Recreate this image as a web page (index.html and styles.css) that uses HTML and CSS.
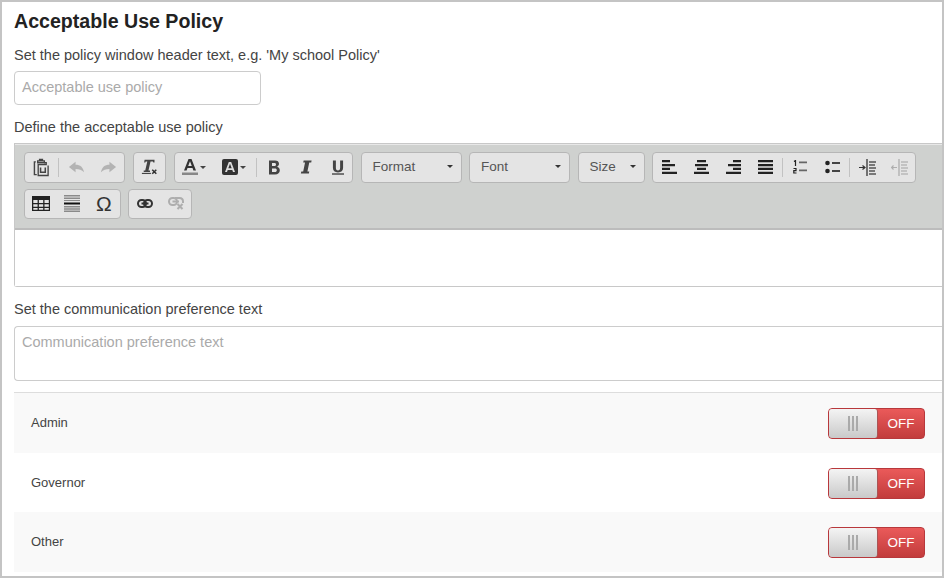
FILE: index.html
```html
<!DOCTYPE html>
<html lang="en">
<head>
<meta charset="utf-8">
<title>Acceptable Use Policy</title>
<link rel="stylesheet" href="styles.css">
</head>
<body>
<main class="frame">
  <h1 class="title">Acceptable Use Policy</h1>
  <label class="label label-first">Set the policy window header text, e.g. 'My school Policy'</label>
  <div class="input">Acceptable use policy</div>
  <label class="label label-editor">Define the acceptable use policy</label>
  <section class="editor">
    <div class="toolbar">
      <div class="row">
        <div class="group g-history">
          <span class="btn"><svg width="17" height="19" viewBox="0 0 18 20"><path d="M3 4H1.500v13.500H4M5 3h7v2H5zM7 1.500h3V3H7z" fill="none" stroke="#444" stroke-width="1.500"/><path d="M12 5h2v2H5.500v11.500H16V8" fill="none" stroke="#444" stroke-width="1.400"/><path d="M8 10v5h5v-5" fill="none" stroke="#444" stroke-width="1.600"/></svg></span>
          <i class="sep"></i>
          <span class="btn off"><svg width="17" height="12" viewBox="0 0 18 12"><path d="M8 0.500 1 6l7 5.500V8c4 0 6.500 0.800 9 3.500C16 6 13 3.500 8 3.500z" fill="#444"/></svg></span>
          <span class="btn off"><svg width="17" height="12" viewBox="0 0 18 12"><path d="M10 0.500 17 6l-7 5.500V8c-4 0-6.500 0.800-9 3.500C2 6 5 3.500 10 3.500z" fill="#444"/></svg></span>
        </div>
        <div class="group g-clear">
          <span class="btn"><svg width="18" height="18" viewBox="0 0 20 20"><path d="M4 2h11v3h-1.300l-.4-1H10.600L8.300 14H10v1.500H3V14h1.700L7 4H5.200l-.4 1H3.500z" fill="#444"/><rect x="1" y="16.500" width="10" height="1.300" fill="#444"/><path d="m12.500 13 4.500 4.500m0-4.500-4.500 4.500" stroke="#333" stroke-width="1.700"/></svg></span>
        </div>
        <div class="group g-style">
          <span class="btn wide-a"><svg width="16" height="18" viewBox="0 0 16 18"><path d="M6.500 1h3L14 12.500h-2.600l-.9-2.500H5.500l-.9 2.500H2zM6.200 8h3.600L8 3.200z" fill="#333" fill-rule="evenodd"/><rect y="14.500" width="16" height="2.500" fill="#888"/></svg><b class="mini"></b></span>
          <span class="btn wide-b"><svg width="16" height="16" viewBox="0 0 16 16"><rect width="16" height="16" rx="2" fill="#333"/><path d="M6.800 3h2.400L13 13h-2l-.7-2H5.700L5 13H3zM6.300 9.200h3.400L8 4.800z" fill="#ddd" fill-rule="evenodd"/></svg><b class="mini"></b></span>
          <i class="sep"></i>
          <span class="btn"><svg width="12" height="15" viewBox="0 0 12 15"><path d="M1 0.500h6c2.500 0 4 1.200 4 3.300 0 1.400-.8 2.500-2 3 1.700.4 2.800 1.600 2.800 3.400 0 2.500-1.800 4.300-4.800 4.300H1zM4 3v3h2.500C7.500 6 8 5.400 8 4.500S7.500 3 6.500 3zM4 8.500V12h3c1.100 0 1.800-.7 1.800-1.800S8.100 8.500 7 8.500z" fill="#444" fill-rule="evenodd"/></svg></span>
          <span class="btn"><svg width="12" height="14" viewBox="0 0 12 15"><path d="M3.500 0.500H12l-.4 2.200H9.500l-2 9.600h2L9.100 14.500H.500L1 12.300h2l2-9.600H3z" fill="#444"/></svg></span>
          <span class="btn"><svg width="12" height="15" viewBox="0 0 13 16"><path d="M1 0.500h3.200v7.700c0 2 .8 3 2.300 3s2.300-1 2.300-3V.5H12v7.800c0 3.300-2 5-5.500 5S1 11.600 1 8.300z" fill="#444"/><rect y="14.300" width="13" height="1.500" fill="#444"/></svg></span>
        </div>
        <div class="combo combo-format"><span>Format</span><b class="caret"></b></div>
        <div class="combo combo-font"><span>Font</span><b class="caret"></b></div>
        <div class="combo combo-size"><span>Size</span><b class="caret"></b></div>
        <div class="group g-para">
          <span class="btn"><svg width="15" height="14" viewBox="0 0 15 14"><path d="M0 0h8v2.300H0zM0 3.900h13v2.300H0zM0 7.800h8v2.300H0zM0 11.700h15V14H0z" fill="#222"/></svg></span>
          <span class="btn"><svg width="15" height="14" viewBox="0 0 15 14"><path d="M3 0h9v2.300H3zM1 3.900h13v2.300H1zM3 7.800h9v2.300H3zM0 11.700h15V14H0z" fill="#222"/></svg></span>
          <span class="btn"><svg width="15" height="14" viewBox="0 0 15 14"><path d="M7 0h8v2.300H7zM2 3.900h13v2.300H2zM7 7.800h8v2.300H7zM0 11.700h15V14H0z" fill="#222"/></svg></span>
          <span class="btn"><svg width="15" height="14" viewBox="0 0 15 14"><path d="M0 0h15v2.300H0zM0 3.900h15v2.300H0zM0 7.800h15v2.300H0zM0 11.700h15V14H0z" fill="#222"/></svg></span>
          <i class="sep"></i>
          <span class="btn"><svg width="14" height="14" viewBox="0 0 14 14"><path d="M6 1.500h8v1.700H6zM6 9.500h8v1.700H6z" fill="#666"/><path d="M1 1.500 2.500.5V6M.5 8.500h2.500v2.200H.800v2.300h2.700" fill="none" stroke="#222" stroke-width="1.200"/></svg></span>
          <span class="btn"><svg width="15" height="14" viewBox="0 0 15 14"><circle cx="2.500" cy="3" r="2.300" fill="#222"/><circle cx="2.500" cy="11" r="2.300" fill="#222"/><path d="M7 2h8v2H7zM7 10h8v2H7z" fill="#444"/></svg></span>
          <i class="sep"></i>
          <span class="btn"><svg width="17" height="17" viewBox="0 0 17 17"><path d="M8 0v17" stroke="#333" stroke-width="1.300"/><path d="M0 8.500h5.500M3.500 6.500l2.500 2-2.500 2" fill="none" stroke="#333" stroke-width="1.200"/><path d="M10 3h7M10 6h6M10 9h7M10 12h6M10 15h7" stroke="#555" stroke-width="1.300"/></svg></span>
          <span class="btn off"><svg width="17" height="17" viewBox="0 0 17 17"><path d="M8 0v17" stroke="#333" stroke-width="1.300"/><path d="M6 8.500H.500M2.500 6.500 0.500 8.500l2 2" fill="none" stroke="#333" stroke-width="1.200"/><path d="M10 3h7M10 6h6M10 9h7M10 12h6M10 15h7" stroke="#555" stroke-width="1.300"/></svg></span>
        </div>
      </div>
      <div class="row">
        <div class="group g-insert">
          <span class="btn"><svg width="18" height="15" viewBox="0 0 18 15"><path d="M0 0h18v15H0z" fill="#222"/><path d="M1.300 4h4.300v3h-4.300zM6.900 4h4.300v3H6.900zM12.500 4h4.300v3h-4.300zM1.300 8.300h4.300v2.500h-4.300zM6.900 8.300h4.300v2.500H6.900zM12.500 8.300h4.300v2.500h-4.300zM1.300 12h4.300v1.800h-4.300zM6.900 12h4.300v1.800H6.900zM12.500 12h4.300v1.800h-4.300z" fill="#e4e4e4"/></svg></span>
          <span class="btn"><svg width="16" height="17" viewBox="0 0 16 17"><path d="M0 0h16v1.500H0zM0 2.500h16V4H0zM0 5h16v1H0zM0 11h16v1.500H0zM0 13.300h16v1.500H0zM0 15.500h16V17H0z" fill="#8a8a8a"/><rect y="7.500" width="16" height="2" fill="#111"/></svg></span>
          <span class="btn omega">Ω</span>
        </div>
        <div class="group g-links">
          <span class="btn"><svg width="16" height="9" viewBox="0 0 16 9"><rect x="1" y="1" width="8" height="7" rx="3.500" fill="none" stroke="#333" stroke-width="2"/><rect x="7" y="1" width="8" height="7" rx="3.500" fill="none" stroke="#333" stroke-width="2"/><path d="M4.500 4.500h7" stroke="#333" stroke-width="2"/></svg></span>
          <span class="btn off"><svg width="16" height="13" viewBox="0 0 16 13"><rect x="1" y="1" width="8" height="7" rx="3.500" fill="none" stroke="#333" stroke-width="2"/><path d="M7 1h4.500C13.500 1 15 2.500 15 4.500V6M4.500 4.500H11" fill="none" stroke="#333" stroke-width="2"/><path d="m9.500 7 5 5m0-5-5 5" stroke="#333" stroke-width="2"/></svg></span>
        </div>
      </div>
    </div>
    <div class="editor-body"></div>
  </section>
  <label class="label label-comm">Set the communication preference text</label>
  <div class="textarea">Communication preference text</div>
  <ul class="roles">
    <li class="role"><span>Admin</span><div class="switch"><span class="handle"><i></i><i></i><i></i></span><span class="state">OFF</span></div></li>
    <li class="role"><span>Governor</span><div class="switch"><span class="handle"><i></i><i></i><i></i></span><span class="state">OFF</span></div></li>
    <li class="role"><span>Other</span><div class="switch"><span class="handle"><i></i><i></i><i></i></span><span class="state">OFF</span></div></li>
  </ul>
</main>
</body>
</html>
```
FILE: styles.css
```css
* { box-sizing: border-box; }
html, body { margin: 0; padding: 0; }
body { width: 944px; height: 578px; overflow: hidden; background: #fff; font-family: "Liberation Sans", Arial, sans-serif; color: #333; }
.frame { width: 944px; height: 578px; border: 2px solid #c4c4c4; padding-left: 12px; overflow: hidden; }
.title { margin: 8px 0 0; font-size: 19.600px; line-height: 22px; font-weight: bold; color: #222; }
.label { display: block; font-size: 14.500px; line-height: 20px; color: #444; }
.label-first { margin-top: 13px; }
.input { margin-top: 6px; width: 247px; height: 34px; border: 1px solid #ccc; border-radius: 4px; padding: 0 7px; font-size: 14.500px; line-height: 31px; color: #aaa; }
.label-editor { margin-top: 12px; }
.editor { margin-top: 6px; height: 144px; border: 1px solid #c8c8c8; border-right: 0; border-radius: 0 0 0 3px; display: flex; flex-direction: column; }
.toolbar { height: 86px; flex: none; background: #cfd1cf; border-bottom: 2px solid #bcbcbc; border-top: 1px solid #e8e8e8; padding: 7px 0 0 9px; display: flex; flex-direction: column; gap: 6px; }
.row { display: flex; gap: 7.500px; height: 30.500px; }
.group { display: flex; align-items: center; height: 30.500px; background: #e4e4e4; border: 1px solid #b6b6b6; border-radius: 4px; flex: none; }
.g-history { width: 101px; }
.g-clear { width: 33.500px; }
.g-style { width: 179.500px; }
.g-para { width: 264px; }
.g-insert { width: 96.500px; }
.g-insert .btn { width: 31.500px; }
.g-links { width: 64px; }
.g-links .btn { width: 31px; }
.btn { width: 32px; height: 28px; display: flex; align-items: center; justify-content: center; flex: none; }
.btn.wide-a { width: 37px; gap: 2px; padding-left: 2px; }
.btn.wide-b { width: 43.500px; gap: 2px; padding-left: 1px; }
.off svg { opacity: .3; }
.sep { width: 1px; height: 19px; margin: 0 1px; background: #c2c2c2; flex: none; }
.mini { width: 0; height: 0; border: 3px solid transparent; border-top-color: #444; border-bottom: 0; }
.omega { font-family: "Liberation Sans", sans-serif; font-size: 21px; color: #333; }
.combo { height: 30.500px; flex: none; display: flex; align-items: center; justify-content: space-between; padding: 0 8px 1px 11px; background: #e4e4e4; border: 1px solid #b6b6b6; border-radius: 4px; font-size: 13.500px; color: #555; }
.combo-format { width: 101px; }
.combo-font { width: 101px; }
.combo-size { width: 67px; }
.caret { width: 0; height: 0; border: 3px solid transparent; border-top-color: #333; border-bottom: 0; }
.editor-body { flex: 1; background: #fff; }
.label-comm { margin-top: 12px; }
.textarea { margin-top: 7px; height: 55px; border: 1px solid #ccc; border-right: 0; border-radius: 4px 0 0 4px; padding: 6px 7px; font-size: 14.500px; line-height: 18px; color: #aaa; }
.roles { list-style: none; margin: 11px 0 0; padding: 0; border-top: 1px solid #ddd; }
.role { height: 59.600px; display: flex; align-items: center; justify-content: space-between; padding: 2px 17px 0; font-size: 13px; color: #444; }
.role:nth-child(odd) { background: #f9f9f9; }
.role > span { position: relative; top: -1px; }
.switch { display: flex; width: 97px; height: 31px; border: 1px solid #b8383c; border-radius: 4px; background: linear-gradient(#ea5a5a, #c23c3c); overflow: hidden; }
.handle { width: 49px; background: linear-gradient(#f4f4f4, #c9c9c9); display: flex; align-items: center; justify-content: center; gap: 2px; border-right: 1px solid #a55; border-radius: 0 3px 3px 0; }
.handle i { width: 2px; height: 15px; background: #aaa; }
.state { flex: 1; text-align: center; color: #fff; font-size: 13.500px; line-height: 29px; }
```
